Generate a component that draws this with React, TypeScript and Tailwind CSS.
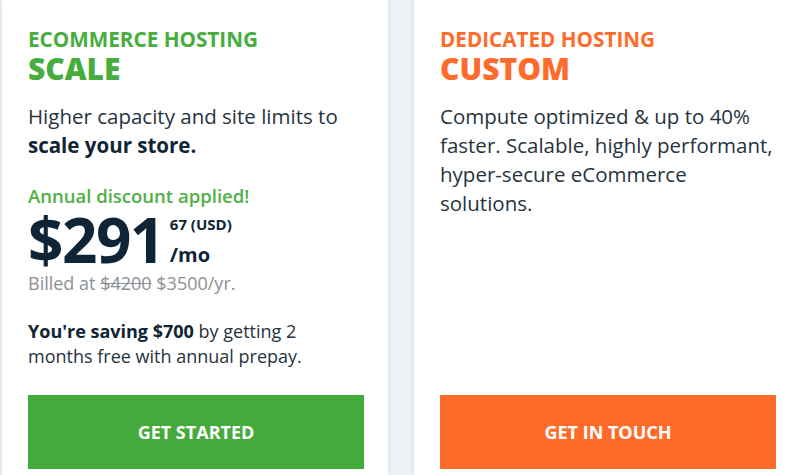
const font = { fontFamily: '"Open Sans", "Liberation Sans", sans-serif' };

function Card({
  kicker,
  title,
  green,
  button,
  children,
}: {
  kicker: string;
  title: string;
  green?: boolean;
  button: string;
  children: React.ReactNode;
}) {
  const accent = green ? 'text-[#47ad3d]' : 'text-[#ff6b2b]';
  return (
    <div className="flex w-[386px] shrink-0 flex-col bg-white px-[26px] pb-[6px] pt-[27px] shadow-[0_0_6px_rgba(30,50,80,0.12)]">
      <div className={`text-[20.7px] font-bold uppercase leading-[24px] ${accent}`}>{kicker}</div>
      <div className={`text-[30px] font-extrabold uppercase leading-[36px] ${accent}`}>{title}</div>
      <div className="flex-1">{children}</div>
      <button
        className={`h-[74px] w-[336px] text-[18px] font-bold uppercase text-white ${
          green ? 'bg-[#44aa3b]' : 'bg-[#ff6c2a]'
        }`}
      >
        {button}
      </button>
    </div>
  );
}

export default function App() {
  return (
    <div style={font} className="flex h-[475px] w-[800px] gap-[26px] overflow-hidden bg-[#eef2f6] pl-[2px]">
      <Card kicker="Ecommerce Hosting" title="Scale" green button="Get Started">
        <p className="mt-[15px] text-[20.5px] leading-[29px] text-[#26333d]">
          Higher capacity and site limits to <br />
          <strong className="font-bold text-[#0f2434]">scale your store.</strong>
        </p>
        <div className="mt-[24px] text-[18.5px] font-semibold leading-[24px] text-[#4fb044]">Annual discount applied!</div>
        <div className="flex items-start text-[#0d2537]">
          <span className="text-[62px] font-bold leading-[62px] tracking-[-1.5px]">$291</span>
          <div className="ml-[6px] flex flex-col pt-[7px]">
            <span className="text-[15px] font-bold leading-[18px]">67 (USD)</span>
            <span className="mt-[10px] text-[20px] font-bold leading-[24px]">/mo</span>
          </div>
        </div>
        <div className="mt-[1px] text-[18px] leading-[24px] text-[#8b9096]">
          Billed at <span className="line-through">$4200</span> $3500/yr.
        </div>
        <p className="mt-[24px] text-[18px] leading-[25px] text-[#26333d]">
          <strong className="font-bold text-[#0f2434]">You're saving $700</strong> by getting 2 <br />
          months free with annual prepay.
        </p>
      </Card>
      <Card kicker="Dedicated Hosting" title="Custom" button="Get in touch">
        <p className="mt-[15px] text-[20.5px] leading-[29px] text-[#26333d]">
          Compute optimized &amp; up to 40% faster. Scalable, highly performant, hyper-secure eCommerce solutions.
        </p>
      </Card>
    </div>
  );
}
